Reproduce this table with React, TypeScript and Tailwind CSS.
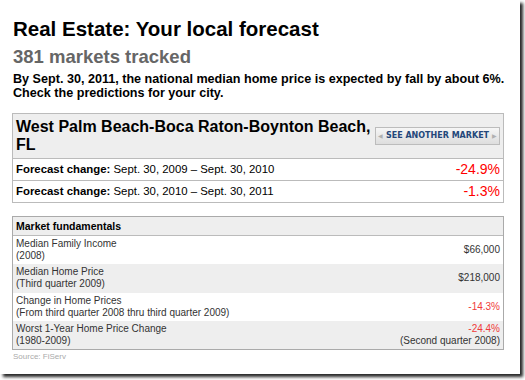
import { ReactNode } from "react"

type Fundamental = { label: string; sub: string; value: ReactNode }

const fundamentals: Fundamental[] = [
  { label: "Median Family Income", sub: "(2008)", value: "$66,000" },
  { label: "Median Home Price", sub: "(Third quarter 2009)", value: "$218,000" },
  {
    label: "Change in Home Prices",
    sub: "(From third quarter 2008 thru third quarter 2009)",
    value: <span className="text-[#f03a3a]">-14.3%</span>,
  },
  {
    label: "Worst 1-Year Home Price Change",
    sub: "(1980-2009)",
    value: (
      <>
        <span className="text-[#f03a3a]">-24.4%</span>
        <br />
        (Second quarter 2008)
      </>
    ),
  },
]

const forecasts = [
  { range: "Sept. 30, 2009 – Sept. 30, 2010", value: "-24.9%" },
  { range: "Sept. 30, 2010 – Sept. 30, 2011", value: "-1.3%" },
]

export default function App() {
  return (
    <div className="w-[525px] h-[380px] bg-white font-['Liberation_Sans',Arial,sans-serif]">
      <div className="w-[520px] h-[374px] bg-white shadow-[3px_3px_3px_rgba(0,0,0,0.85)] pl-[12px] pt-[17px]">
        {/* Heading */}
        <h1 className="text-[20.5px] leading-[24px] font-bold text-black pl-[1px]">Real Estate: Your local forecast</h1>
        <h2 className="text-[18.5px] leading-[21px] font-bold text-[#666] pl-[1px] mt-[5px]">381 markets tracked</h2>
        <p className="text-[12.6px] leading-[14px] font-bold text-black mt-[5px] pl-[1px] whitespace-nowrap">
          By Sept. 30, 2011, the national median home price is expected by fall by about 6%.
          <br />
          Check the predictions for your city.
        </p>

        {/* Market box */}
        <div className="mt-[13px] w-[492px] border border-[#bbb]">
          <div className="h-[45px] flex items-center justify-between bg-[#eee] pl-[3px] pr-[3px] border-b border-[#bbb]">
            <div className="text-[16px] leading-[18px] font-bold text-black">
              West Palm Beach-Boca Raton-Boynton Beach,
              <br />
              FL
            </div>
            <button className="h-[18px] w-[125px] flex items-center justify-between px-[2px] bg-gradient-to-b from-[#f6f6f6] to-[#dddddd] border border-[#bcbcbc]">
              <span className="text-[6px] text-[#b0b0b0]">◀</span>
              <span className="font-['DejaVu_Sans',sans-serif] text-[8px] font-bold text-[#24477a] whitespace-nowrap">
                SEE ANOTHER MARKET
              </span>
              <span className="text-[6px] text-[#b0b0b0]">▶</span>
            </button>
          </div>
          {forecasts.map((f, i) => (
            <div
              key={f.value}
              className={`flex items-center justify-between px-[3px] text-[11.4px] text-black ${
                i === 0 ? "h-[22px] border-b border-[#bbb]" : "h-[21px]"
              }`}
            >
              <span>
                <b>Forecast change:</b> {f.range}
              </span>
              <span className="text-[14px] text-[#f00]">{f.value}</span>
            </div>
          ))}
        </div>

        {/* Fundamentals */}
        <div className="mt-[13px] w-[492px] border border-[#aaa] text-[10px] leading-[12px] text-[#333]">
          <div className="h-[19px] flex items-center bg-[#eee] px-[3px] text-[10.5px] font-bold text-black border-b border-[#bbb]">
            Market fundamentals
          </div>
          {fundamentals.map((r, i) => (
            <div
              key={r.label}
              className={`flex items-center justify-between h-[28.3px] px-[3px] ${i % 2 === 1 ? "bg-[#eee]" : "bg-white"}`}
            >
              <div>
                {r.label}
                <br />
                {r.sub}
              </div>
              <div className="text-right">{r.value}</div>
            </div>
          ))}
        </div>
        <div className="text-[8px] leading-[10px] text-[#aaa] mt-[2px] pl-[1px]">Source: FiServ</div>
      </div>
    </div>
  )
}
